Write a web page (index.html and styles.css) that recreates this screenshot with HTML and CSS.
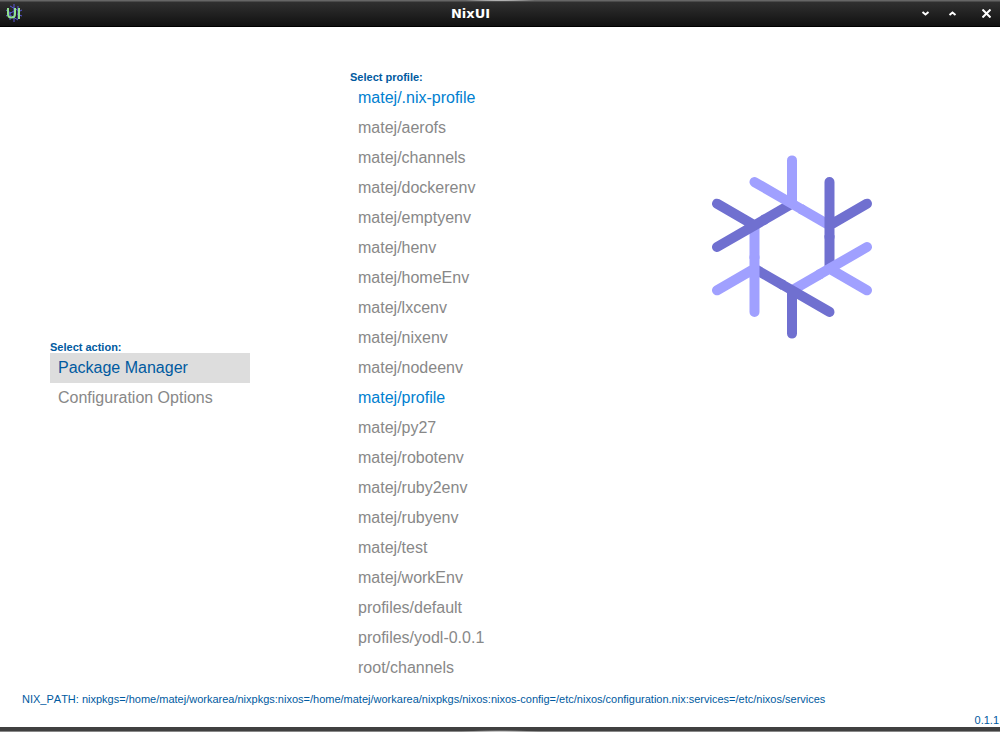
FILE: index.html
```html
<!DOCTYPE html>
<html lang="en">
<head>
<meta charset="utf-8">
<title>NixUI</title>
<link rel="stylesheet" href="styles.css">
</head>
<body>
<header class="titlebar">
  <svg class="app-icon" viewBox="0 0 18 20" aria-hidden="true">
    <path class="icon-flake" d="M9 1v18M5 3l9 5M13 3v13M1 7l5 3M1 13l8-5M17 7l-4 2M17 13l-5-2M5 17V9M13 17l-8-5"/>
    <path class="icon-letters" d="M3 5v6q0 3.500 3.500 3.500t3.500-3.500V5M14 5v11"/>
  </svg>
  <h1 class="title">NixUI</h1>
  <div class="window-controls">
    <button class="control" aria-label="Minimize"><svg viewBox="0 0 9 9"><path d="M1.500 3l3 2.500 3-2.500"/></svg></button>
    <button class="control" aria-label="Maximize"><svg viewBox="0 0 9 9"><path d="M1.500 6l3-2.500 3 2.500"/></svg></button>
    <button class="control close" aria-label="Close"><svg viewBox="0 0 9 9"><path d="M0.500 0.500l8 8M8.500 0.500l-8 8"/></svg></button>
  </div>
</header>
<main class="content">
  <section class="panel">
    <h2 class="label">Select action:</h2>
    <ul class="options">
      <li><button class="option selected">Package Manager</button></li>
      <li><button class="option">Configuration Options</button></li>
    </ul>
  </section>
  <section class="panel">
    <h2 class="label">Select profile:</h2>
    <ul class="options">
      <li><button class="option current">matej/.nix-profile</button></li>
      <li><button class="option">matej/aerofs</button></li>
      <li><button class="option">matej/channels</button></li>
      <li><button class="option">matej/dockerenv</button></li>
      <li><button class="option">matej/emptyenv</button></li>
      <li><button class="option">matej/henv</button></li>
      <li><button class="option">matej/homeEnv</button></li>
      <li><button class="option">matej/lxcenv</button></li>
      <li><button class="option">matej/nixenv</button></li>
      <li><button class="option">matej/nodeenv</button></li>
      <li><button class="option current">matej/profile</button></li>
      <li><button class="option">matej/py27</button></li>
      <li><button class="option">matej/robotenv</button></li>
      <li><button class="option">matej/ruby2env</button></li>
      <li><button class="option">matej/rubyenv</button></li>
      <li><button class="option">matej/test</button></li>
      <li><button class="option">matej/workEnv</button></li>
      <li><button class="option">profiles/default</button></li>
      <li><button class="option">profiles/yodl-0.0.1</button></li>
      <li><button class="option">root/channels</button></li>
    </ul>
  </section>
  <svg class="logo" viewBox="-82 -92 164 184" role="img" aria-label="Nix snowflake">
    <defs>
      <path id="edge" d="M8.500-38.390L37.500-21.650"/>
      <path id="arm" d="M-37.500-64.950L10-37.530M0-86.600V-43.300" stroke-linecap="round"/>
    </defs>
    <g class="light">
      <use href="#edge"/><use href="#edge" transform="rotate(120)"/><use href="#edge" transform="rotate(240)"/>
    </g>
    <g class="dark">
      <use href="#edge" transform="rotate(60)"/><use href="#edge" transform="rotate(180)"/><use href="#edge" transform="rotate(300)"/>
    </g>
    <g class="light">
      <use href="#arm"/><use href="#arm" transform="rotate(120)"/><use href="#arm" transform="rotate(240)"/>
    </g>
    <g class="dark">
      <use href="#arm" transform="rotate(60)"/><use href="#arm" transform="rotate(180)"/><use href="#arm" transform="rotate(300)"/>
    </g>
  </svg>
</main>
<footer class="status">
  <p class="path">NIX_PATH: nixpkgs=/home/matej/workarea/nixpkgs:nixos=/home/matej/workarea/nixpkgs/nixos:nixos-config=/etc/nixos/configuration.nix:services=/etc/nixos/services</p>
  <p class="version">0.1.1</p>
</footer>
<div class="frame-bottom"></div>
</body>
</html>
```
FILE: styles.css
```css
* {
  box-sizing: border-box;
}

body {
  display: flex;
  flex-direction: column;
  min-height: 100vh;
  margin: 0;
  background: #fff;
  color: #005aa0;
  font-family: "Liberation Sans", Arial, sans-serif;
  font-size: 11px;
  line-height: 12px;
}

.titlebar {
  display: grid;
  grid-template-columns: 1fr auto 1fr;
  align-items: center;
  height: 27px;
  padding: 0 0 0 5px;
  background:
    radial-gradient(ellipse 40px 1px at 50% 0, #fff, transparent) no-repeat,
    linear-gradient(#666 0, #666 1px, #303030 2px, #222 50%, #111 100%);
  border-bottom: 1px solid #000;
}

.app-icon {
  width: 18px;
  height: 20px;
  fill: none;
}

.icon-flake {
  stroke: #5858d8;
}

.icon-letters {
  stroke: #90e090;
  stroke-width: 2;
}

.title {
  margin: 0;
  padding: 1px 64px 0 0;
  color: #fff;
  font: bold 13px/17px "DejaVu Sans", sans-serif;
}

.window-controls {
  display: flex;
  justify-content: flex-end;
}

.control {
  display: flex;
  align-items: center;
  justify-content: center;
  width: 27px;
  height: 26px;
  padding: 0;
  border: 0;
  background: none;
}

.control svg {
  width: 9px;
  height: 9px;
  fill: none;
  stroke: #fff;
  stroke-width: 2;
}

.close {
  width: 28px;
  margin-left: 6px;
}

.content {
  display: grid;
  flex: 1;
  grid-template-columns: repeat(3, 1fr);
  align-items: center;
  padding: 36px 50px 0;
}

.panel {
  padding-right: 100px;
}

.label {
  margin: 0;
  font-size: 11px;
  line-height: 12px;
}

.options {
  margin: 0;
  padding: 0;
  list-style: none;
}

.option {
  display: block;
  width: 100%;
  height: 30px;
  padding: 0 8px;
  border: 0;
  background: none;
  color: #888;
  font: 16px/30px "Liberation Sans", Arial, sans-serif;
  text-align: left;
  white-space: nowrap;
}

.current {
  color: #0080d0;
}

.selected {
  background: #ddd;
  color: #005aa0;
}

.logo {
  align-self: start;
  width: 164px;
  height: 184px;
  margin: 92px 0 0 60px;
  fill: none;
  stroke-width: 10;
}

.light {
  stroke: #a0a0ff;
}

.dark {
  stroke: #7070d0;
}

.path {
  margin: 0;
  padding: 2px 22px 0;
  font-kerning: none;
}

.version {
  margin: 0;
  padding: 9px 1px 1px;
  text-align: right;
}

.frame-bottom {
  height: 5px;
  background:
    radial-gradient(ellipse 40px 2px at 50% 100%, #ddd, transparent) no-repeat,
    linear-gradient(#404040 0, #404040 4px, #888 4px);
}
```
